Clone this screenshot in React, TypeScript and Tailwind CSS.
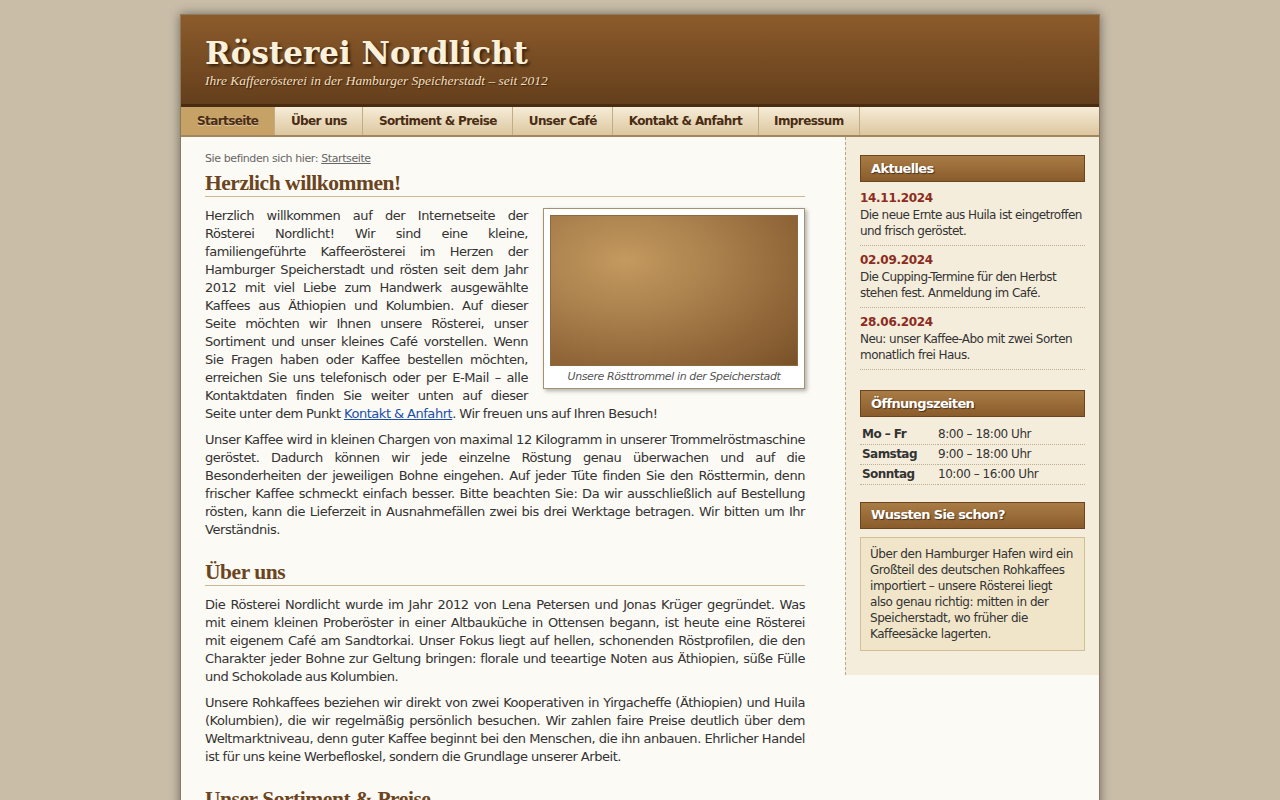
const navLinks: { title: string; active?: boolean }[] = [
  { title: "Startseite", active: true },
  { title: "Über uns" },
  { title: "Sortiment & Preise" },
  { title: "Unser Café" },
  { title: "Kontakt & Anfahrt" },
  { title: "Impressum" },
];

const news = [
  { date: "14.11.2024", text: "Die neue Ernte aus Huila ist eingetroffen und frisch geröstet." },
  { date: "02.09.2024", text: "Die Cupping-Termine für den Herbst stehen fest. Anmeldung im Café." },
  { date: "28.06.2024", text: "Neu: unser Kaffee-Abo mit zwei Sorten monatlich frei Haus." },
];

const hours = [
  { day: "Mo – Fr", time: "8:00 – 18:00 Uhr" },
  { day: "Samstag", time: "9:00 – 18:00 Uhr" },
  { day: "Sonntag", time: "10:00 – 16:00 Uhr" },
];

function Heading({ children, first }: { children: React.ReactNode; first?: boolean }) {
  return (
    <h2
      className={`font-['Liberation_Serif',serif] text-[21.5px] font-bold leading-[24px] text-[#6b4420] border-b border-[#cbb994] pb-[1px] mb-[10px] ${
        first ? "mt-[5px]" : "mt-[21px]"
      }`}
    >
      {children}
    </h2>
  );
}

function SideHeading({ children }: { children: React.ReactNode }) {
  return (
    <h3 className="h-[27px] flex items-center px-[10px] border border-[#6b4420] bg-gradient-to-b from-[#a97c45] to-[#8a5c2c] text-[13px] tracking-[-0.65px] font-bold text-white [text-shadow:1px_1px_1px_rgba(0,0,0,0.5)]">
      {children}
    </h3>
  );
}

const para = "text-justify leading-[18px] mb-[8px] [word-spacing:-0.3px]";

export default function App() {
  return (
    <div className="min-h-screen bg-[#c9bda8] pt-[14px] font-['DejaVu_Sans',sans-serif] text-[13px] tracking-[-0.45px] text-[#333]">
      <div className="mx-auto w-[920px] border border-[#8d7a5c] bg-[#fcfaf5] shadow-[0_0_10px_rgba(0,0,0,0.45)]">
        {/* header */}
        <header className="h-[92px] bg-gradient-to-b from-[#8c5b2b] to-[#643f1c] px-[24px] pt-[19px] border-b-[3px] border-[#4a2c13] tracking-normal">
          <h1 className="font-['DejaVu_Serif',serif] text-[31px] font-bold leading-[38px] text-[#fbf0da] [text-shadow:2px_2px_3px_rgba(0,0,0,0.6)]">
            Rösterei Nordlicht
          </h1>
          <p className="font-['Liberation_Serif',serif] italic text-[13.5px] leading-[18px] text-[#f1dfbd] [text-shadow:1px_1px_1px_rgba(0,0,0,0.5)]">
            Ihre Kaffeerösterei in der Hamburger Speicherstadt – seit 2012
          </p>
        </header>

        {/* nav */}
        <nav className="flex h-[30px] bg-gradient-to-b from-[#f6ecd7] to-[#dcc7a0] border-b-2 border-[#a3875c]">
          {navLinks.map((item) => (
            <a
              key={item.title}
              className={`flex items-center border-r border-[#c4ab82] text-[12px] tracking-[-0.6px] font-bold text-[#4a2c13] ${
                item.active ? "bg-[#c6a266] px-[16px] [text-shadow:0_1px_0_rgba(255,255,255,0.4)]" : "px-[15.5px]"
              }`}
            >
              {item.title}
            </a>
          ))}
        </nav>

        <div className="flex items-start">
          {/* main column */}
          <main className="w-[664px] shrink-0 pl-[24px] pr-[40px] pt-[15px] pb-[40px]">
            <p className="text-[11px] tracking-[-0.4px] leading-[14px] text-[#666]">
              Sie befinden sich hier: <a className="underline">Startseite</a>
            </p>

            <Heading first>Herzlich willkommen!</Heading>

            <div className="float-right ml-[15px] mt-[1px] mb-[8px] w-[262px] border border-[#a39373] bg-white p-[6px] pb-[4px] shadow-[2px_2px_4px_rgba(0,0,0,0.3)]">
              <div className="h-[151px] border border-[#8b6a40] bg-[radial-gradient(ellipse_at_30%_30%,#c49a60_0%,#a47a48_45%,#7a5028_100%)]" />
              <p className="pt-[4px] text-center text-[11px] tracking-[-0.4px] italic leading-[14px] text-[#555]">
                Unsere Rösttrommel in der Speicherstadt
              </p>
            </div>

            <p className={para}>
              Herzlich willkommen auf der Internetseite der Rösterei Nordlicht! Wir sind eine kleine,
              familiengeführte Kaffeerösterei im Herzen der Hamburger Speicherstadt und rösten seit dem Jahr
              2012 mit viel Liebe zum Handwerk ausgewählte Kaffees aus Äthiopien und Kolumbien. Auf dieser
              Seite möchten wir Ihnen unsere Rösterei, unser Sortiment und unser kleines Café vorstellen. Wenn
              Sie Fragen haben oder Kaffee bestellen möchten, erreichen Sie uns telefonisch oder per E-Mail – alle
              Kontaktdaten finden Sie weiter unten auf dieser Seite unter dem Punkt{" "}
              <a className="text-[#1a4ea8] underline">Kontakt &amp; Anfahrt</a>. Wir freuen uns auf Ihren Besuch!
            </p>
            <p className={para}>
              Unser Kaffee wird in kleinen Chargen von maximal 12 Kilogramm in unserer Trommelröstmaschine
              geröstet. Dadurch können wir jede einzelne Röstung genau überwachen und auf die Besonderheiten
              der jeweiligen Bohne eingehen. Auf jeder Tüte finden Sie den Rösttermin, denn frischer Kaffee
              schmeckt einfach besser. Bitte beachten Sie: Da wir ausschließlich auf Bestellung rösten, kann die
              Lieferzeit in Ausnahmefällen zwei bis drei Werktage betragen. Wir bitten um Ihr Verständnis.
            </p>

            <Heading>Über uns</Heading>
            <p className={para}>
              Die Rösterei Nordlicht wurde im Jahr 2012 von Lena Petersen und Jonas Krüger gegründet. Was
              mit{"\u00a0"}einem kleinen Proberöster in einer Altbauküche in Ottensen begann, ist heute eine Rösterei
              mit{"\u00a0"}eigenem Café am Sandtorkai. Unser Fokus liegt auf hellen, schonenden Röstprofilen, die den
              Charakter jeder Bohne zur Geltung bringen: florale und teeartige Noten aus Äthiopien, süße Fülle
              und Schokolade aus Kolumbien.
            </p>
            <p className={para}>
              Unsere Rohkaffees beziehen wir direkt von zwei Kooperativen in Yirgacheffe (Äthiopien) und Huila
              (Kolumbien), die wir regelmäßig persönlich besuchen. Wir zahlen faire Preise deutlich über dem
              Weltmarktniveau, denn guter Kaffee beginnt bei den Menschen, die ihn anbauen. Ehrlicher Handel
              ist für uns keine Werbefloskel, sondern die Grundlage unserer Arbeit.
            </p>

            <Heading>Unser Sortiment &amp; Preise</Heading>
            <p className={para}>
              Unser Sortiment umfasst derzeit zwei Single-Origin-Kaffees und einen Espresso aus eigener
              Mischung. Alle Sorten erhalten Sie als ganze Bohne oder auf Wunsch frisch gemahlen.
            </p>
          </main>

          {/* sidebar */}
          <aside className="w-[254px] shrink-0 border-l border-dashed border-[#b9a683] bg-[#f5eddc] px-[14px] pt-[18px] pb-[24px] text-[12px] tracking-[-0.45px]">
            <SideHeading>Aktuelles</SideHeading>
            <div className="mt-[8px] mb-[20px]">
              {news.map((n) => (
                <div key={n.date} className="border-b border-dotted border-[#bfae8c] pt-[6px] pb-[6px] first:pt-0">
                  <div className="font-bold tracking-[-0.3px] leading-[17px] text-[#8b2c1c]">{n.date}</div>
                  <div className="leading-[16px] tracking-[-0.55px]">{n.text}</div>
                </div>
              ))}
            </div>

            <SideHeading>Öffnungszeiten</SideHeading>
            <table className="mt-[7px] mb-[17px] w-full">
              <tbody>
                {hours.map((h) => (
                  <tr key={h.day} className="border-b border-dotted border-[#bfae8c]">
                    <td className="w-[78px] pl-[2px] h-[20px] font-bold tracking-[-0.55px]">{h.day}</td>
                    <td className="h-[20px]">{h.time}</td>
                  </tr>
                ))}
              </tbody>
            </table>

            <SideHeading>Wussten Sie schon?</SideHeading>
            <div className="mt-[8px] border border-[#d2bf98] bg-[#f1e5c9] px-[9px] py-[8px] leading-[16px]">
              Über den Hamburger Hafen wird ein Großteil des deutschen Rohkaffees importiert – unsere Rösterei
              liegt also genau richtig: mitten in der Speicherstadt, wo früher die Kaffeesäcke lagerten.
            </div>
          </aside>
        </div>
      </div>
    </div>
  );
}
